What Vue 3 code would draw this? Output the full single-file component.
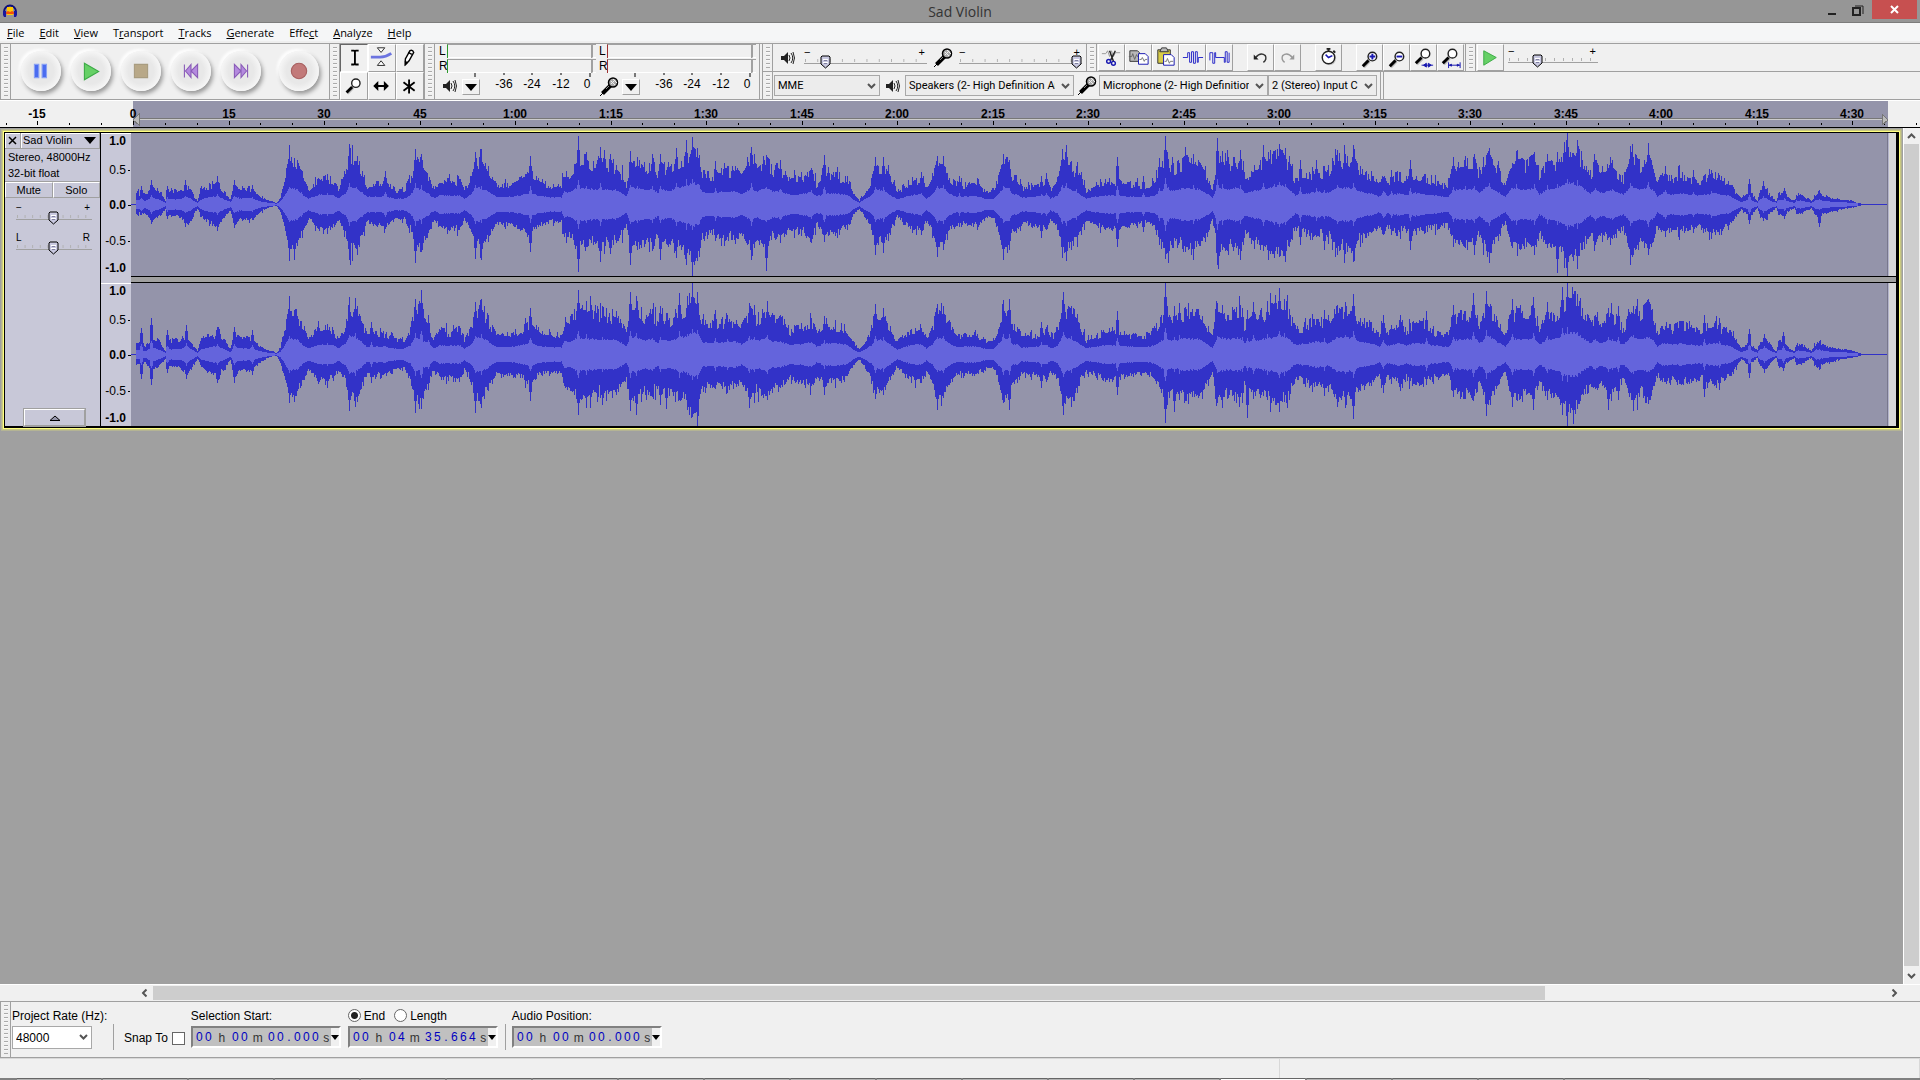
<script setup>
import { ref } from "vue";

const menus = [
  ["", "F", "ile"],
  ["", "E", "dit"],
  ["", "V", "iew"],
  ["T", "r", "ansport"],
  ["", "T", "racks"],
  ["", "G", "enerate"],
  ["Effe", "c", "t"],
  ["", "A", "nalyze"],
  ["", "H", "elp"],
];

const transport = ["pause", "play", "stop", "start", "end", "record"];
const tools = ["select", "envelope", "draw", "zoom", "shift", "multi"];
const meters = [
  { name: "Playback", icon: "speaker" },
  { name: "Recording", icon: "mic" },
];
const editGroups = [
  ["cut", "copy", "paste", "trim", "silence"],
  ["undo", "redo"],
  ["clock"],
  ["zoomin", "zoomout", "fitsel", "fitproj"],
];

const outputVolume = ref(14);
const inputVolume = ref(100);
const speed = ref(30);
const gain = ref(49);
const pan = ref(49);
const range = ref("end");
const snap = ref(false);

const times = {
  start: "00h00m00.000s",
  end: "00h04m35.664s",
  position: "00h00m00.000s",
};

function isDigit(char) {
  return char >= "0" && char <= "9";
}

// timeline scale
const origin = 133;
const pxPerSecond = 6.368;
const duration = 275.664;
const selectionEnd = Math.round(origin + duration * pxPerSecond);

const ticks = [];
for (let t = -20; t <= 280; t += 5) {
  ticks.push({
    x: Math.round(origin + t * pxPerSecond),
    label: t % 15 === 0 ? formatTime(t) : "",
  });
}

function formatTime(t) {
  if (t < 60) {
    return String(t);
  }
  return Math.floor(t / 60) + ":" + String(t % 60).padStart(2, "0");
}

// x, height above the axis, height below it
const envelope = [
  [136, 11, 9], [145, 9, 8], [152, 16, 16], [158, 13, 11], [165, 3, 4], [168, 13, 11], [178, 14, 11],
  [187, 17, 20], [197, 3, 4], [200, 13, 9], [205, 16, 15], [217, 20, 21], [230, 5, 5], [234, 18, 20],
  [240, 15, 14], [252, 15, 15], [258, 8, 8], [265, 5, 4], [273, 2, 1], [276, 1, 1], [280, 6, 7],
  [284, 22, 20], [289, 42, 40], [297, 38, 38], [302, 24, 24], [308, 14, 14], [318, 24, 23], [332, 24, 23],
  [338, 15, 16], [345, 28, 25], [349, 45, 45], [356, 42, 42], [363, 28, 27], [367, 18, 18], [376, 20, 20],
  [385, 20, 20], [394, 14, 13], [404, 14, 14], [410, 24, 22], [415, 43, 42], [421, 36, 36], [427, 28, 30],
  [434, 14, 15], [439, 24, 22], [453, 20, 22], [459, 24, 23], [464, 13, 13], [471, 26, 26], [476, 42, 42],
  [483, 40, 38], [488, 32, 32], [496, 18, 18], [510, 18, 19], [523, 24, 23], [530, 30, 29], [537, 24, 20],
  [549, 18, 17], [561, 18, 17], [564, 33, 34], [569, 30, 31], [576, 40, 40], [586, 42, 38], [608, 38, 36],
  [616, 36, 36], [622, 28, 28], [626, 19, 22], [630, 42, 42], [637, 43, 42], [645, 34, 36], [652, 42, 40],
  [657, 27, 29], [662, 40, 36], [669, 32, 35], [676, 40, 40], [686, 46, 46], [692, 54, 55], [698, 50, 52],
  [702, 30, 31], [710, 28, 28], [721, 30, 30], [735, 33, 33], [741, 25, 25], [750, 40, 38], [757, 33, 35],
  [766, 42, 40], [773, 34, 30], [780, 34, 30], [790, 23, 24], [802, 26, 26], [811, 32, 32], [816, 20, 20],
  [824, 28, 26], [835, 28, 28], [847, 24, 22], [853, 12, 10], [859, 4, 4], [865, 12, 13], [871, 22, 23],
  [876, 37, 37], [883, 35, 36], [890, 24, 24], [897, 12, 11], [907, 20, 21], [914, 22, 25], [921, 25, 26],
  [926, 14, 14], [932, 25, 25], [937, 42, 42], [944, 40, 40], [948, 28, 27], [957, 17, 18], [973, 21, 20],
  [981, 16, 17], [986, 12, 12], [993, 14, 13], [998, 26, 26], [1003, 40, 42], [1009, 38, 40], [1012, 25, 25],
  [1017, 25, 25], [1022, 15, 17], [1036, 18, 20], [1046, 24, 24], [1050, 15, 15], [1057, 22, 20],
  [1062, 44, 44], [1066, 42, 42], [1076, 32, 32], [1081, 23, 22], [1086, 14, 16], [1106, 22, 24],
  [1117, 21, 22], [1138, 18, 18], [1149, 19, 18], [1157, 26, 26], [1165, 42, 44], [1170, 33, 36],
  [1186, 40, 40], [1198, 40, 38], [1206, 26, 30], [1212, 16, 15], [1217, 43, 44], [1227, 38, 38],
  [1240, 42, 42], [1244, 27, 28], [1255, 35, 36], [1265, 39, 40], [1279, 49, 46], [1286, 44, 44],
  [1295, 24, 23], [1306, 27, 27], [1316, 33, 30], [1329, 29, 28], [1337, 43, 42], [1353, 42, 41],
  [1360, 32, 32], [1372, 27, 26], [1379, 19, 20], [1383, 32, 32], [1387, 22, 22], [1399, 28, 27],
  [1406, 23, 23], [1415, 30, 28], [1430, 24, 23], [1440, 19, 21], [1448, 18, 18], [1453, 36, 36],
  [1465, 38, 38], [1475, 40, 38], [1479, 28, 28], [1488, 46, 48], [1495, 36, 34], [1505, 20, 18],
  [1511, 40, 40], [1528, 38, 37], [1534, 42, 40], [1539, 25, 26], [1547, 38, 36], [1557, 40, 41],
  [1567, 56, 54], [1573, 56, 54], [1582, 43, 42], [1590, 28, 28], [1595, 40, 36], [1600, 29, 28],
  [1612, 38, 34], [1623, 24, 24], [1631, 46, 46], [1640, 38, 36], [1648, 46, 42], [1653, 36, 34],
  [1657, 19, 20], [1663, 30, 27], [1672, 25, 24], [1680, 28, 26], [1700, 22, 22], [1713, 28, 28],
  [1730, 21, 20], [1736, 11, 11], [1741, 6, 4], [1749, 12, 11], [1757, 4, 3], [1760, 14, 12], [1766, 14, 14],
  [1770, 8, 7], [1776, 3, 3], [1778, 11, 11], [1784, 12, 10], [1790, 5, 5], [1794, 3, 3], [1796, 9, 9],
  [1802, 9, 8], [1811, 3, 3], [1816, 11, 12], [1825, 8, 8], [1832, 5, 6], [1843, 5, 4], [1855, 2, 2],
  [1862, 0, 0], [1887, 0, 0],
];

const peaks = [
  [
    [141, 18, 10], [151, 24, 19], [167, 18, 14], [185, 24, 22], [217, 28, 26], [234, 24, 23], [252, 19, 15],
    [289, 50, 42], [294, 46, 55], [301, 34, 26], [327, 30, 29], [349, 60, 55], [357, 45, 50], [385, 33, 24],
    [415, 55, 58], [421, 50, 40], [475, 52, 54], [481, 52, 55], [530, 48, 47], [578, 68, 67], [586, 48, 40],
    [600, 57, 57], [630, 53, 60], [637, 47, 45], [652, 50, 46], [660, 50, 55], [676, 56, 53], [686, 64, 60],
    [692, 67, 71], [697, 56, 56], [715, 43, 33], [721, 36, 41], [751, 57, 55], [766, 49, 66], [780, 44, 38],
    [811, 36, 38], [824, 49, 37], [875, 47, 50], [883, 47, 48], [921, 32, 30], [937, 48, 52], [943, 48, 45],
    [959, 28, 22], [1003, 50, 55], [1009, 44, 45], [1041, 28, 33], [1046, 31, 25], [1062, 55, 53],
    [1066, 59, 50], [1071, 40, 45], [1076, 38, 32], [1117, 47, 42], [1143, 28, 27], [1159, 46, 40],
    [1165, 68, 54], [1168, 45, 58], [1193, 50, 55], [1217, 66, 60], [1218, 50, 64], [1222, 53, 45],
    [1240, 54, 55], [1263, 59, 46], [1274, 53, 53], [1279, 60, 52], [1285, 56, 57], [1300, 44, 40],
    [1316, 44, 32], [1324, 38, 45], [1337, 54, 50], [1353, 59, 57], [1391, 34, 30], [1410, 44, 45],
    [1453, 47, 38], [1465, 48, 43], [1474, 50, 50], [1489, 56, 58], [1516, 53, 38], [1534, 52, 50],
    [1547, 50, 38], [1557, 52, 68], [1567, 71, 71], [1577, 64, 64], [1595, 44, 40], [1612, 44, 34],
    [1630, 56, 50], [1648, 61, 50], [1665, 38, 32], [1693, 34, 28], [1711, 34, 34], [1749, 25, 19],
    [1763, 23, 16], [1784, 16, 14], [1819, 14, 22],
  ],
  [
    [141, 26, 24], [151, 36, 30], [167, 24, 18], [186, 29, 24], [217, 27, 28], [234, 27, 28], [252, 24, 20],
    [289, 48, 45], [294, 42, 47], [327, 30, 33], [349, 53, 56], [355, 56, 52], [371, 32, 28], [415, 55, 58],
    [421, 64, 54], [428, 39, 35], [475, 52, 58], [481, 55, 53], [530, 46, 46], [578, 64, 60], [586, 53, 53],
    [602, 45, 50], [630, 62, 56], [636, 58, 60], [660, 48, 50], [666, 41, 54], [679, 61, 42], [687, 58, 55],
    [692, 71, 60], [697, 62, 71], [715, 44, 34], [727, 39, 38], [749, 51, 53], [754, 49, 48], [767, 53, 45],
    [824, 38, 40], [875, 50, 44], [883, 46, 40], [937, 50, 55], [943, 48, 43], [1003, 54, 48],
    [1009, 55, 55], [1041, 32, 33], [1063, 62, 60], [1071, 48, 52], [1117, 43, 40], [1165, 71, 68],
    [1174, 48, 57], [1179, 51, 45], [1217, 50, 48], [1222, 49, 53], [1242, 46, 48], [1247, 44, 63],
    [1253, 52, 44], [1267, 53, 45], [1279, 66, 57], [1284, 55, 46], [1324, 44, 41], [1337, 49, 52],
    [1345, 52, 53], [1353, 60, 64], [1383, 39, 38], [1426, 43, 30], [1453, 49, 42], [1473, 61, 46],
    [1486, 63, 61], [1512, 55, 52], [1533, 57, 55], [1547, 52, 45], [1562, 67, 60], [1567, 71, 71],
    [1573, 60, 69], [1577, 60, 54], [1608, 46, 55], [1618, 48, 45], [1633, 48, 56], [1649, 46, 45],
    [1704, 39, 42], [1719, 36, 35], [1749, 25, 23], [1764, 20, 18], [1783, 22, 16], [1819, 13, 15],
  ],
];

const clipLeft = 131;

function column(x, up, down) {
  const top = Math.round(Math.max(0, 71 - up));
  const bottom = Math.round(Math.min(143, 72 + down));
  return `M${x - clipLeft} ${top}h1V${bottom}h-1z`;
}

function buildWave(spikes, seed) {
  let state = seed;
  const random = () => {
    state = (state * 1103515245 + 12345) % 2147483648;
    return state / 2147483648;
  };

  let peak = "";
  let rms = "";
  let key = 0;
  let jitter = 1;

  for (let x = 136; x < 1887; x++) {
    while (x > envelope[key + 1][0]) {
      key++;
    }
    const [x0, up0, down0] = envelope[key];
    const [x1, up1, down1] = envelope[key + 1];
    const k = (x - x0) / (x1 - x0);
    const baseUp = up0 + (up1 - up0) * k;
    const baseDown = down0 + (down1 - down0) * k;

    // now and then a column stands out from its neighbours
    const burst = random() > 0.86 ? 1.18 : 1;
    if (random() > 0.35) {
      jitter = 0.8 + random() * 0.42;
    }
    let up = baseUp * jitter * burst;
    let down = baseDown * (jitter * 0.5 + (0.8 + random() * 0.42) * 0.5) * burst;
    let body = (baseUp + baseDown) / 2;

    for (const [px, pUp, pDown] of spikes) {
      const distance = Math.abs(px - x);
      if (distance < 2) {
        const fall = distance === 0 ? 1 : 0.8;
        up = Math.max(up, pUp * fall);
        down = Math.max(down, pDown * fall);
        body = Math.max(body, pUp * fall * 0.95);
      }
    }
    peak += column(x, up, down);
    if (x < 1858) {
      const level = body * (0.36 + random() * 0.05);
      rms += column(x, level, level);
    }
  }
  return { peak, rms };
}

const channels = [buildWave(peaks[0], 7), buildWave(peaks[1], 91)];

const scale = [
  { text: "1.0", y: 11, bold: true },
  { text: "0.5", y: 40, tick: 36 },
  { text: "0.0", y: 75, tick: 71, bold: true },
  { text: "-0.5", y: 111, tick: 107 },
  { text: "-1.0", y: 138, bold: true },
];
</script>

<template>
  <svg class="defs" aria-hidden="true">
    <symbol id="speaker" viewBox="0 0 14 14">
      <path d="M0 5h3l4-4v12L3 9H0z" fill="#222" />
      <path d="M8 4q2 3 0 6M10 2q3.500 5 0 10M12 1q3 6 0 12" fill="none" stroke="#222" />
    </symbol>
    <symbol id="mic" viewBox="0 0 20 20">
      <path d="M1 19L4 16" stroke="#000" />
      <path d="M3.500 16.500L12 8" stroke="#000" stroke-width="4" />
      <path d="M7 12l5-5" stroke="#888" stroke-width="1" />
      <circle cx="14" cy="5.500" r="4.500" fill="#aaa" stroke="#000" stroke-width="1.500" />
      <path d="M12 4l4 4M14 2l4 4M12 7l4-4" stroke="#eee" />
    </symbol>
    <symbol id="glass" viewBox="0 0 20 20">
      <path d="M9 12l-6 6" stroke="#bbb" stroke-width="3" />
      <path d="M8 11l-6 6" stroke="#000" stroke-width="3" />
      <circle cx="12" cy="7" r="4.500" fill="#fff" stroke="#222" stroke-width="1.500" />
    </symbol>
    <symbol id="chevron" viewBox="0 0 9 6">
      <path d="M1 1l3.500 3.500L8 1" fill="none" stroke="#555" stroke-width="2" />
    </symbol>
  </svg>

  <div class="app">
    <header class="titlebar">
      <svg class="logo" viewBox="0 0 16 16">
        <path d="M2 9a6 6.500 0 0 1 12 0" fill="none" stroke="#101078" stroke-width="2" />
        <path d="M5 4h6v8H5z" fill="#ffc800" />
        <path d="M4 9l2-1 2 1 2-1 2 1v2H4z" fill="#f05010" />
        <path d="M1 8h3v6H2L1 12zM12 8h3v4l-1 2h-2z" fill="#1818a0" />
      </svg>
      <h1>Sad Violin</h1>
      <div class="window-buttons">
        <button type="button" aria-label="Minimize">
          <svg viewBox="0 0 25 19"><path d="M9 11h8v2H9z" fill="#222" /></svg>
        </button>
        <button type="button" aria-label="Restore">
          <svg viewBox="0 0 25 19">
            <path d="M9 6h7v7H9z" fill="none" stroke="#222" stroke-width="2" />
            <path d="M11 4h8v8" fill="none" stroke="#222" />
          </svg>
        </button>
        <button type="button" class="close" aria-label="Close">
          <svg viewBox="0 0 45 19"><path d="M19 6l7 7M26 6l-7 7" stroke="#fff" stroke-width="2" /></svg>
        </button>
      </div>
    </header>

    <nav class="menubar">
      <a v-for="menu in menus" :key="menu.join('')" href="#">{{ menu[0] }}<u>{{ menu[1] }}</u>{{ menu[2] }}</a>
    </nav>

    <section class="toolbars">
      <div class="grip"></div>
      <div class="transport">
        <button v-for="name in transport" :key="name" type="button" :class="name" :aria-label="name">
          <svg viewBox="0 0 20 20">
            <path v-if="name === 'pause'" d="M4 4h4v12H4zM11 4h4v12h-4z" fill="#4a6cf0" stroke="#88a0f4" />
            <path v-else-if="name === 'play'" d="M4 3l13 7.500L4 18z" fill="#66d066" stroke="#3cab46" />
            <path v-else-if="name === 'stop'" d="M4 4h12v12H4z" fill="#b8a888" stroke="#a89c80" />
            <g v-else-if="name === 'start'" fill="#b48ade" stroke="#8a5cb8">
              <path d="M4 4v12M10 4v12l-5-6zM16 4v12l-6-6z" />
            </g>
            <g v-else-if="name === 'end'" fill="#b48ade" stroke="#8a5cb8">
              <path d="M16 4v12M4 4v12l6-6zM10 4v12l5-6z" />
            </g>
            <circle v-else cx="10" cy="10" r="7" fill="#c27a7a" stroke="#a86060" />
          </svg>
        </button>
      </div>

      <div class="grip"></div>
      <div class="tools">
        <button v-for="(name, index) in tools" :key="name" type="button" :class="{ pressed: index === 0 }" :aria-label="name">
          <svg viewBox="0 0 28 28">
            <path v-if="name === 'select'" d="M11 6h3l1 1 1-1h3M11 21h3l1-1 1 1h3M15 7v13" fill="none" stroke="#000" stroke-width="2" />
            <g v-else-if="name === 'envelope'">
              <path d="M2 13h10q6 0 12-4" fill="none" stroke="#6c74e0" stroke-width="3" />
              <path d="M9 3h8l-4 5zM9 22h8l-4-5z" fill="#fff" stroke="#222" />
            </g>
            <g v-else-if="name === 'draw'">
              <path d="M9 21v-6l5-9q3-1 4 2l-5 9z" fill="#fff" stroke="#000" stroke-width="1.500" />
              <path d="M9 21v-3l2 1zM12 8l4 2" stroke="#000" stroke-width="1.500" />
            </g>
            <use v-else-if="name === 'zoom'" href="#glass" x="4" y="4" width="20" height="20" />
            <path v-else-if="name === 'shift'" d="M6 14h14M9 11l-3 3 3 3zM17 11l3 3-3 3z" stroke="#000" stroke-width="2" />
            <path v-else d="M13 7v15M7 10l12 9M19 10L7 19" stroke="#000" stroke-width="2" />
          </svg>
        </button>
      </div>

      <div class="grip"></div>
      <div class="meters">
        <div v-for="meter in meters" :key="meter.name" class="meter" :class="meter.icon">
          <div v-for="side in ['L', 'R']" :key="side" class="level">
            <span>{{ side }}</span>
            <div class="bar"></div>
            <div class="peak"></div>
          </div>
          <div class="meter-foot">
            <svg class="meter-icon"><use :href="'#' + meter.icon" /></svg>
            <button type="button" :aria-label="meter.name + ' meter options'">
              <svg viewBox="0 0 12 7"><path d="M0 0h12L6 7z" /></svg>
            </button>
            <svg class="meter-scale">
              <path d="M8 0v4M37 0v2M65 0v2M94 0v2M123 0v4" stroke="#000" />
              <g text-anchor="middle">
                <text x="37" y="15">-36</text>
                <text x="65" y="15">-24</text>
                <text x="94" y="15">-12</text>
                <text x="120" y="15">0</text>
              </g>
            </svg>
          </div>
        </div>
      </div>

      <div class="stack">
        <div class="row">
          <div class="grip"></div>
          <div class="mixer">
            <svg class="icon-speaker"><use href="#speaker" /></svg>
            <div class="slider wide">
              <span>−</span><span>+</span>
              <input v-model="outputVolume" type="range" aria-label="Output volume" />
            </div>
            <svg class="icon-mic"><use href="#mic" /></svg>
            <div class="slider wide">
              <span>−</span><span>+</span>
              <input v-model="inputVolume" type="range" aria-label="Input volume" />
            </div>
          </div>
          <div class="grip"></div>
          <div class="edit">
            <div v-for="(group, index) in editGroups" :key="index" class="group">
              <button v-for="name in group" :key="name" type="button" :aria-label="name">
                <svg viewBox="0 0 26 26">
                  <g v-if="name === 'cut'" fill="none">
                    <path d="M3 9h4l2-3 2 6 2-6 2 6 2-4h5" stroke="#999" />
                    <path d="M11 6l4 11M17 6l-5 10" stroke="#222" stroke-width="1.500" />
                    <circle cx="10" cy="17" r="2" stroke="#1818b0" stroke-width="1.500" />
                    <circle cx="15" cy="19" r="2" stroke="#1818b0" stroke-width="1.500" />
                  </g>
                  <g v-else-if="name === 'copy'">
                    <path d="M4 6h8l2 2v9H4z" fill="#b8b8b8" stroke="#333" />
                    <path d="M3 12h3l1-3 2 6 2-5 1 2h3" fill="none" stroke="#666" />
                    <path d="M13 9h7l3 3v8H13z" fill="#fff" stroke="#1818b0" />
                    <path d="M14 15h2l1-2 2 4 1-2h2" fill="none" stroke="#777" />
                  </g>
                  <g v-else-if="name === 'paste'">
                    <path d="M5 5h13v14H5z" fill="#d8cc48" stroke="#333" />
                    <path d="M9 3h5l2 4H7z" fill="#bbb" stroke="#333" />
                    <path d="M11 10h8l3 3v8H11z" fill="#fff" stroke="#1818b0" />
                    <path d="M12 17h2l1-3 2 5 1-2h3" fill="none" stroke="#777" />
                  </g>
                  <path v-else-if="name === 'trim'" d="M3 13h5V8h2v10h2V7h2v12h2V7h2v11h1v-5h5" fill="none" stroke="#2828c8" />
                  <path v-else-if="name === 'silence'" d="M3 16V8h3v11h2V8h1v5h9v5h1V7h2v11h2V8" fill="none" stroke="#2828c8" />
                  <g v-else-if="name === 'undo'">
                    <path d="M8 13q5-6 10-2 2 4-2 7" fill="none" stroke="#333" stroke-width="1.500" />
                    <path d="M6 10v5h5z" fill="#222" />
                  </g>
                  <g v-else-if="name === 'redo'">
                    <path d="M18 13q-5-6-10-2-2 4 2 7" fill="none" stroke="#999" stroke-width="1.500" />
                    <path d="M20 10v5h-5z" fill="#999" />
                  </g>
                  <g v-else-if="name === 'clock'">
                    <circle cx="14" cy="14" r="7" fill="#ccc" />
                    <circle cx="13" cy="13" r="6.500" fill="#fff" stroke="#222" stroke-width="1.500" />
                    <path d="M11 4h4M13 4v3M18 6l2 2" stroke="#222" stroke-width="2" />
                    <path d="M10 10l3 3 4-2" fill="none" stroke="#1818b0" stroke-width="1.500" />
                  </g>
                  <g v-else>
                    <use href="#glass" :x="name.startsWith('zoom') ? 4 : 3" :y="name.startsWith('zoom') ? 5 : 2" width="20" height="20" />
                    <path v-if="name === 'zoomin'" d="M13 12h6M16 9v6" stroke="#1818b0" stroke-width="2" />
                    <path v-if="name === 'zoomout'" d="M13 12h6" stroke="#1818b0" stroke-width="2" />
                    <path v-if="name === 'fitsel'" d="M11 21h12M13 21l3-2v4zM21 21l-3-2v4z" fill="#1818b0" stroke="#1818b0" />
                    <path v-if="name === 'fitproj'" d="M11 21h12M11 18v6M23 18v6M12 21l2-1v2zM22 21l-2-1v2z" stroke="#1818b0" />
                  </g>
                </svg>
              </button>
            </div>
          </div>
          <div class="grip"></div>
          <div class="edit">
            <button type="button" aria-label="Play at speed">
              <svg viewBox="0 0 26 26"><path d="M6 6l13 7-13 8z" fill="#66d066" stroke="#3cab46" /></svg>
            </button>
            <div class="slider mid">
              <span>−</span><span>+</span>
              <input v-model="speed" type="range" aria-label="Playback speed" />
            </div>
          </div>
        </div>

        <div class="row devices">
          <div class="grip"></div>
          <div class="select host">
            <select aria-label="Audio host"><option>MME</option></select>
            <svg><use href="#chevron" /></svg>
          </div>
          <svg class="icon-speaker"><use href="#speaker" /></svg>
          <div class="select device">
            <select aria-label="Output device"><option>Speakers (2- High Definition Au</option></select>
            <svg><use href="#chevron" /></svg>
          </div>
          <svg class="icon-mic"><use href="#mic" /></svg>
          <div class="select device">
            <select aria-label="Input device"><option>Microphone (2- High Definition</option></select>
            <svg><use href="#chevron" /></svg>
          </div>
          <div class="select inputs">
            <select aria-label="Input channels"><option>2 (Stereo) Input C</option></select>
            <svg><use href="#chevron" /></svg>
          </div>
          <div class="dock-end"></div>
        </div>
      </div>
    </section>

    <svg class="timeline">
      <rect :x="origin" y="0" :width="selectionEnd - origin" height="26" fill="#9494aa" />
      <g v-for="tick in ticks" :key="tick.x">
        <rect :x="tick.x" :y="tick.label ? 20 : 22" width="1" :height="tick.label ? 4 : 2" />
        <text v-if="tick.label" :x="tick.x" y="17" text-anchor="middle">{{ tick.label }}</text>
      </g>
      <rect :x="origin + 6" y="17" :width="selectionEnd - origin - 12" height="1" fill="#777" />
      <rect :x="origin + 6" y="18" :width="selectionEnd - origin - 12" height="1" fill="#ccc" />
      <path :d="`M${origin + 6} 13v11l-6-5z`" fill="#bbb" stroke="#777" />
      <path :d="`M${selectionEnd - 6} 13v11l6-5z`" fill="#bbb" stroke="#777" />
    </svg>

    <main class="workspace">
      <div class="canvas">
        <article class="track">
          <aside class="panel">
            <div class="panel-title">
              <button type="button" aria-label="Remove track">
                <svg viewBox="0 0 9 9"><path d="M1 1l7 7M8 1L1 8" stroke="#000" stroke-width="1.500" /></svg>
              </button>
              <button type="button" class="name">
                Sad Violin
                <svg viewBox="0 0 12 7"><path d="M0 0h12L6 7z" /></svg>
              </button>
            </div>
            <p>Stereo, 48000Hz</p>
            <p>32-bit float</p>
            <div class="panel-buttons">
              <button type="button">Mute</button>
              <button type="button">Solo</button>
            </div>
            <div class="slider small">
              <span>−</span><span>+</span>
              <input v-model="gain" type="range" aria-label="Gain" />
            </div>
            <div class="slider small">
              <span>L</span><span>R</span>
              <input v-model="pan" type="range" aria-label="Pan" />
            </div>
            <button type="button" class="collapse" aria-label="Collapse track">
              <svg viewBox="0 0 12 6"><path d="M1 5.500h10L6 1z" fill="#9494aa" stroke="#000" /></svg>
            </button>
          </aside>

          <div class="channels">
            <div v-for="(wave, index) in channels" :key="index" class="channel">
              <svg class="scale">
                <g v-for="mark in scale" :key="mark.text">
                  <text x="25" :y="mark.y" text-anchor="end" :class="{ bold: mark.bold }">{{ mark.text }}</text>
                  <rect v-if="mark.tick" x="27" :y="mark.tick" :width="mark.bold ? 3 : 2" height="1" />
                </g>
              </svg>
              <svg class="wave">
                <rect width="1756" height="143" fill="#9494aa" />
                <rect x="1756" width="1" height="143" fill="#77778c" />
                <rect x="1757" width="1" height="143" fill="#b4b4cc" />
                <rect y="71" width="1756" height="1" fill="#3232c8" />
                <path :d="wave.peak" fill="#3232c8" />
                <path :d="wave.rms" fill="#6464dc" />
              </svg>
            </div>
          </div>
        </article>
      </div>
      <div class="vscroll">
        <button type="button" aria-label="Scroll up"><svg class="up"><use href="#chevron" /></svg></button>
        <div class="thumb"></div>
        <button type="button" aria-label="Scroll down"><svg><use href="#chevron" /></svg></button>
      </div>
    </main>

    <div class="hscroll">
      <button type="button" aria-label="Scroll left"><svg class="left"><use href="#chevron" /></svg></button>
      <div class="thumb"></div>
      <div class="rest"></div>
      <button type="button" aria-label="Scroll right"><svg class="right"><use href="#chevron" /></svg></button>
    </div>

    <section class="selection-bar">
      <div class="grip"></div>
      <div class="field rate">
        <label for="rate">Project Rate (Hz):</label>
        <div class="select">
          <select id="rate"><option>48000</option></select>
          <svg><use href="#chevron" /></svg>
        </div>
      </div>
      <div class="divider"></div>
      <label class="snap">Snap To <input v-model="snap" type="checkbox" /></label>
      <div class="field">
        <span id="start-label">Selection Start:</span>
        <div class="time" role="group" aria-labelledby="start-label">
          <template v-for="(char, index) in times.start" :key="index">
            <input v-if="isDigit(char)" :value="char" maxlength="1" aria-label="Start digit" />
            <span v-else :class="{ unit: char !== '.', last: char === 's' }">{{ char }}</span>
          </template>
          <button type="button" aria-label="Start format"><svg viewBox="0 0 8 5"><path d="M0 0h8L4 5z" /></svg></button>
        </div>
      </div>
      <div class="field">
        <div class="radios">
          <label><input v-model="range" type="radio" value="end" />End</label>
          <label><input v-model="range" type="radio" value="length" />Length</label>
        </div>
        <div class="time" role="group" aria-label="Selection end">
          <template v-for="(char, index) in times.end" :key="index">
            <input v-if="isDigit(char)" :value="char" maxlength="1" aria-label="End digit" />
            <span v-else :class="{ unit: char !== '.', last: char === 's' }">{{ char }}</span>
          </template>
          <button type="button" aria-label="End format"><svg viewBox="0 0 8 5"><path d="M0 0h8L4 5z" /></svg></button>
        </div>
      </div>
      <div class="divider near"></div>
      <div class="field">
        <span id="position-label">Audio Position:</span>
        <div class="time" role="group" aria-labelledby="position-label">
          <template v-for="(char, index) in times.position" :key="index">
            <input v-if="isDigit(char)" :value="char" maxlength="1" aria-label="Position digit" />
            <span v-else :class="{ unit: char !== '.', last: char === 's' }">{{ char }}</span>
          </template>
          <button type="button" aria-label="Position format"><svg viewBox="0 0 8 5"><path d="M0 0h8L4 5z" /></svg></button>
        </div>
      </div>
    </section>

    <footer class="statusbar">
      <div></div>
      <div></div>
    </footer>
    <div class="taskbar">
      <span v-for="n in 19" :key="n" :class="{ active: n === 15 }"></span>
    </div>
  </div>
</template>

<style>
body {
  margin: 0;
  background: #f0f0f0;
}
</style>

<style scoped>
* {
  box-sizing: border-box;
}

button {
  padding: 0;
  border: none;
  background: none;
  font: inherit;
  color: inherit;
}

svg {
  display: block;
  flex: none;
}

.defs {
  display: none;
}

.app {
  display: flex;
  flex-direction: column;
  min-height: 100vh;
  background: #f0f0f0;
  color: #000;
  font-family: "Liberation Sans", Arial, sans-serif;
  font-size: 12px;
}

.titlebar {
  display: grid;
  grid-template-columns: 1fr auto 1fr;
  height: 23px;
  background: #969696;
  border-bottom: 1px solid #7c7c7c;
}

.logo {
  width: 16px;
  height: 16px;
  margin: 3px 0 0 2px;
}

h1 {
  margin: 0;
  font-family: "Open Sans", sans-serif;
  font-size: 14px;
  line-height: 23px;
  font-weight: 400;
  color: #333;
}

.window-buttons {
  display: flex;
  justify-content: flex-end;
  padding-right: 3px;
}

.window-buttons svg {
  height: 19px;
}

.window-buttons .close {
  height: 19px;
  margin-left: 3px;
  background: #c75050;
}

.menubar {
  display: flex;
  gap: 15px;
  height: 21px;
  padding: 0 7px;
  background: #f5f6f7;
  border-bottom: 1px solid #a0a0a0;
  box-shadow: inset 0 -2px #eee;
  font-family: "Open Sans", sans-serif;
  font-size: 11px;
  line-height: 19px;
}

.menubar a {
  color: #000;
  text-decoration: none;
}

.toolbars {
  display: flex;
  height: 57px;
  border-bottom: 1px solid #fff;
  box-shadow: inset 0 -1px #a0a0a0;
  padding-bottom: 1px;
}

.grip {
  width: 11px;
  flex: none;
  border: 1px solid #a0a0a0;
  border-width: 0 1px;
  background: repeating-linear-gradient(#aaa 0 1px, #f8f8f8 1px 2px, #f0f0f0 2px 4px) 50% 50% / 4px calc(100% - 6px) no-repeat;
}

.transport {
  display: flex;
  align-items: center;
  gap: 10px;
  width: 318px;
  padding: 0 0 2px 10px;
}

.transport button {
  width: 40px;
  height: 40px;
  padding: 9px;
  border-radius: 50%;
  background: radial-gradient(circle, #e8e8e8 45%, #f8f8f8 75%);
  box-shadow: 2px 3px 4px #999, -2px -2px 3px #fff;
}

.transport .record {
  margin-left: 8px;
}

.transport svg {
  width: 22px;
  height: 22px;
}

.tools {
  display: grid;
  grid-template-columns: repeat(3, 28px);
  width: 84px;
}

.tools button,
.edit button {
  border: 1px solid;
  border-color: #fff #a0a0a0 #a0a0a0 #fff;
}

.tools .pressed {
  border-color: #666 #fff #fff #666;
}

.tools svg {
  width: 26px;
  height: 26px;
}

.meters {
  display: flex;
  width: 325px;
  padding-left: 4px;
  border-right: 1px solid #a0a0a0;
}

.meter {
  width: 161px;
}

.level {
  display: flex;
  height: 15px;
}

.level span {
  width: 8px;
  line-height: 14px;
}

.bar {
  width: 145px;
  height: 14px;
  border-left: 1px solid #2c9a2c;
  border-top: 1px solid #a0a0a0;
  border-right: 1px solid #a0a0a0;
  box-shadow: inset 0 -1px #fff;
}

.mic .bar {
  border-left-color: #a03030;
}

.peak {
  width: 4px;
  height: 14px;
  border-left: 1px solid #a0a0a0;
  border-top: 1px solid #a0a0a0;
  border-bottom: 1px solid #fff;
}

.meter-foot {
  display: flex;
  height: 24px;
  margin-top: -1px;
}

.meter-icon {
  width: 20px;
  height: 20px;
  margin-top: 4px;
}

.speaker .meter-icon {
  width: 14px;
  height: 14px;
  margin: 6px 2px 0 4px;
}

.meter-foot button {
  width: 18px;
  height: 16px;
  margin: 6px 0 0 3px;
  padding: 4px 2px;
  border: 1px solid;
  border-color: #fff #a0a0a0 #a0a0a0 #fff;
}

.meter-foot button svg {
  width: 12px;
  height: 7px;
}

.meter-scale {
  width: 128px;
  height: 24px;
  margin-left: -13px;
  pointer-events: none;
}

.stack {
  flex: 1;
  padding-left: 2px;
}

.row {
  display: flex;
  height: 28px;
  border-bottom: 1px solid #a0a0a0;
}

.row.devices {
  align-items: center;
  height: 27px;
  border-bottom: none;
}

.row .grip {
  align-self: stretch;
}

.mixer {
  display: flex;
  align-items: center;
  width: 313px;
  padding-left: 8px;
}

.icon-speaker {
  width: 14px;
  height: 14px;
  margin: 0 5px 0 6px;
}

.mixer .icon-speaker {
  margin: 0 9px 0 0;
}

.icon-mic {
  width: 20px;
  height: 20px;
  margin: 0 2px 0 3px;
}

.mixer .icon-mic {
  margin: 0 6px;
}

.slider {
  display: grid;
  grid-template-columns: 1fr 1fr;
  grid-template-rows: 9px 16px;
  font-size: 11px;
  line-height: 14px;
}

.slider span + span {
  padding-right: 2px;
  text-align: right;
}

.slider input {
  grid-column: 1 / 3;
  width: 100%;
  height: 16px;
  margin: 0;
  appearance: none;
  background:
    linear-gradient(#a0a0a0, #a0a0a0) 0 9px / 100% 1px no-repeat,
    linear-gradient(90deg, #b0b0b0 1px, transparent 1px) 1px 5px / 10% 3px repeat-x;
}

.slider input::-webkit-slider-thumb {
  appearance: none;
  width: 11px;
  height: 14px;
  background: url("data:image/svg+xml,%3Csvg xmlns='http://www.w3.org/2000/svg' viewBox='0 0 11 14'%3E%3Cpath d='M2 1h7l1 1v7l-4.500 4L1 9V2z' fill='%23c8c8e0' stroke='%23000'/%3E%3Cpath d='M3 4.500h5M3 7.500h5' stroke='%23fff'/%3E%3Cpath d='M4 5.500h3M4 8.500h3' stroke='%238080a0'/%3E%3C/svg%3E");
}

.wide {
  width: 123px;
}

.mid {
  width: 90px;
  margin-left: 4px;
}

.small {
  width: 76px;
  margin: 0 0 5px 11px;
  font-size: 10px;
}

.edit {
  display: flex;
  gap: 14px;
  padding: 0 1px;
}

.edit + .grip + .edit {
  gap: 0;
}

.group {
  display: flex;
}

.edit button {
  width: 27px;
  height: 27px;
}

.edit svg {
  width: 25px;
  height: 25px;
}

.select {
  position: relative;
}

.select select {
  display: block;
  width: 100%;
  height: 21px;
  padding: 0 18px 0 3px;
  appearance: none;
  border: 1px solid #a8a8a8;
  border-radius: 0;
  background: #ececec;
  color: #000;
  font-family: Roboto, sans-serif;
  font-size: 11px;
}

.select svg {
  position: absolute;
  right: 4px;
  top: 8px;
  width: 9px;
  height: 6px;
  pointer-events: none;
}

.host {
  width: 106px;
  margin-left: 1px;
}

.device {
  width: 169px;
}

.inputs {
  width: 109px;
}

.dock-end {
  align-self: stretch;
  width: 4px;
  margin-left: 3px;
  border: 1px solid #a0a0a0;
  border-width: 0 1px;
}

.timeline {
  width: 100%;
  height: 27px;
  border-bottom: 1px solid #000;
  font-weight: 700;
  shape-rendering: crispEdges;
}

.workspace {
  display: flex;
  flex: 1;
}

.canvas {
  flex: 1;
  min-width: 0;
  padding: 1px 1px 0;
  background: #a0a0a0;
  border-right: 1px solid #fff;
}

.track {
  display: flex;
  padding: 4px 6px 5px 4px;
  background: #000;
  box-shadow: inset 0 0 0 1px #b4b494, inset 0 0 0 2px #c8c880, inset 0 0 0 3px #ffff80;
}

.panel {
  display: flex;
  flex-direction: column;
  flex: none;
  width: 96px;
  background: #c8c8d8;
  border-right: 1px solid #000;
  font-size: 11px;
}

.panel-title {
  display: flex;
  height: 16px;
  border-bottom: 1px solid #a0a0a0;
  box-shadow: inset 1px 1px #fff;
}

.panel-title button {
  width: 16px;
  padding: 3px;
  border-right: 1px solid #a0a0a0;
}

.panel-title svg {
  width: 9px;
  height: 9px;
}

.panel-title .name {
  display: flex;
  justify-content: space-between;
  flex: 1;
  padding: 1px 3px 0 1px;
  border-left: 1px solid #fff;
}

.panel-title .name svg {
  width: 12px;
  height: 7px;
  margin-top: 3px;
}

.panel p {
  margin: 0;
  padding-left: 3px;
  line-height: 16px;
}

.panel-buttons {
  display: grid;
  grid-template-columns: 1fr 1fr;
  height: 17px;
  margin-bottom: 3px;
  border-top: 1px solid #a0a0a0;
}

.panel-buttons button {
  border: 1px solid;
  border-color: #fff #a0a0a0 #a0a0a0 #fff;
}

.collapse {
  display: flex;
  align-items: center;
  justify-content: center;
  width: 61px;
  height: 17px;
  margin: auto auto 0 19px;
  border: 1px solid;
  border-color: #fff #a0a0a0 #a0a0a0 #fff;
  box-shadow: 0 0 0 1px #a0a0a0;
}

.collapse svg {
  width: 12px;
  height: 6px;
}

.channels {
  display: flex;
  flex-direction: column;
  flex: 1;
  min-width: 0;
  gap: 7px;
  background: linear-gradient(90deg, #c8c8d8 30px, #a0a0a0 30px);
}

.channel {
  display: flex;
  height: 143px;
}

.scale {
  width: 30px;
  height: 143px;
  background: #c8c8d8;
  border-top: 1px solid #fff;
  font-size: 12px;
}

.scale .bold {
  font-weight: 700;
}

.wave {
  flex: 1;
  min-width: 0;
  height: 143px;
  background: #d8d8d8;
  box-shadow: 0 1px #000, 0 -1px #000;
  shape-rendering: crispEdges;
}

.vscroll {
  display: flex;
  flex-direction: column;
  width: 16px;
}

.vscroll button {
  height: 16px;
  padding: 5px 3px;
}

.vscroll svg,
.hscroll svg {
  width: 9px;
  height: 6px;
}

.up {
  transform: rotate(180deg);
}

.left {
  transform: rotate(90deg);
}

.right {
  transform: rotate(-90deg);
}

.vscroll .thumb {
  flex: 1;
  margin: 0 1px 2px 0;
  background: #cdcdcd;
}

.hscroll {
  display: flex;
  height: 18px;
  padding: 1px 17px 1px 136px;
  border-top: 1px solid #fff;
  border-bottom: 1px solid #a0a0a0;
}

.hscroll button {
  width: 17px;
  padding: 0 4px;
}

.hscroll .thumb {
  flex: 1392;
  background: #cdcdcd;
}

.hscroll .rest {
  flex: 341;
}

.selection-bar {
  display: flex;
  height: 56px;
  border-bottom: 1px solid #a0a0a0;
}

.field {
  margin-right: 7px;
}

.field > label,
.field > span,
.radios {
  display: block;
  height: 24px;
  padding-top: 7px;
  line-height: 14px;
  white-space: nowrap;
}

.rate {
  width: 101px;
  margin: 0 0 0 1px;
}

.rate .select {
  width: 80px;
}

.rate select {
  height: 23px;
  background: #fff;
  font-family: inherit;
  font-size: 12px;
}

.divider {
  width: 1px;
  height: 26px;
  margin: 22px 10px 0 0;
  background: #a0a0a0;
}

.divider.near {
  margin-right: 6px;
}

.snap {
  display: flex;
  align-items: center;
  gap: 4px;
  height: 14px;
  margin: 29px 6px 0 0;
}

.snap input {
  width: 13px;
  height: 13px;
  margin: 0;
  appearance: none;
  border: 1px solid #666;
  background: #fff;
}

.radios,
.radios label {
  display: flex;
  gap: 3px;
}

.radios {
  gap: 9px;
}

.radios input {
  width: 13px;
  height: 13px;
  margin: 0;
  appearance: none;
  border: 1px solid #666;
  border-radius: 50%;
  background: #fff;
}

.radios input:checked {
  background: radial-gradient(circle, #222 3px, #fff 4px);
}

.time {
  display: flex;
  width: 150px;
  height: 22px;
  padding-left: 2px;
  border: 2px solid;
  border-color: #808080 #fff #fff #808080;
  background: #c0c0c0;
  line-height: 18px;
  color: #0000c0;
}

.time input {
  width: 9px;
  padding: 0;
  border: none;
  background: none;
  color: inherit;
  font: inherit;
  text-align: center;
}

.time span {
  width: 8px;
  text-align: center;
}

.time .unit {
  width: 18px;
  padding-top: 1px;
  color: #333;
}

.time .last {
  width: 9px;
  margin-left: auto;
}

.time button {
  display: flex;
  align-items: center;
  justify-content: center;
  width: 8px;
  background: #f0f0f0;
}

.time button svg {
  width: 8px;
  height: 5px;
}

.statusbar {
  display: grid;
  grid-template-columns: 2fr 1fr;
  height: 20px;
  border-top: 1px solid #d8d8d8;
}

.statusbar div {
  border-right: 1px solid #d8d8d8;
}

.taskbar {
  display: flex;
  gap: 2px;
  height: 2px;
  padding-left: 17px;
  background: #808080;
}

.taskbar span {
  width: 84px;
  border-top: 1px solid #666;
  background: #b4b4b4;
}

.taskbar .active {
  background: #fff;
}
</style>
